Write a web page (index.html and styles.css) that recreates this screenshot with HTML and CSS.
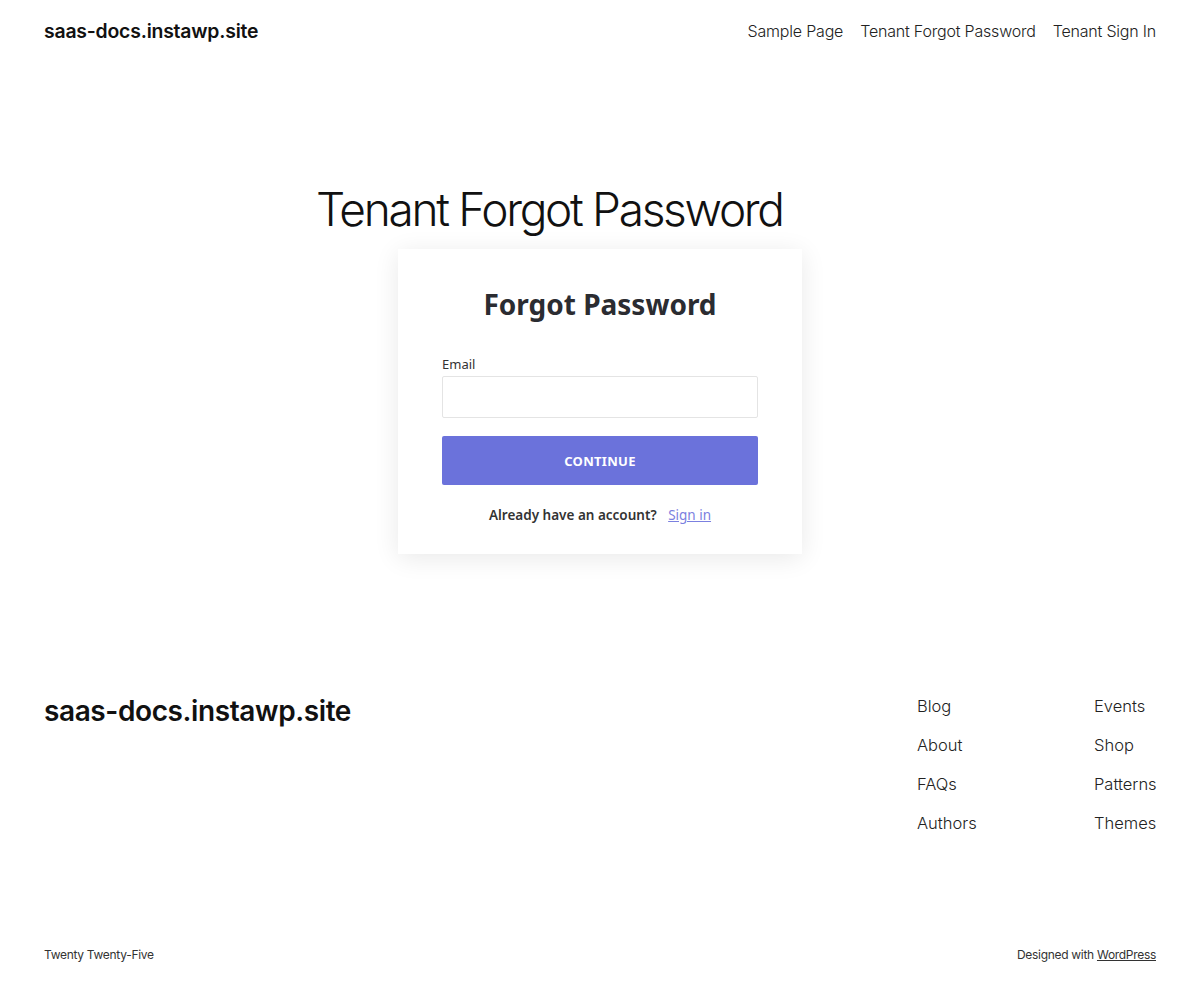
FILE: index.html
```html
<!DOCTYPE html>
<html lang="en">
<head>
  <meta charset="UTF-8">
  <meta name="viewport" content="width=device-width, initial-scale=1.0">
  <title>Tenant Forgot Password – saas-docs.instawp.site</title>
  <link rel="stylesheet" href="styles.css">
</head>
<body>
  <header class="site-header">
    <a class="site-title" href="#">saas-docs.instawp.site</a>
    <nav class="main-nav">
      <a href="#">Sample Page</a>
      <a href="#">Tenant Forgot Password</a>
      <a href="#">Tenant Sign In</a>
    </nav>
  </header>

  <main class="site-main">
    <h1 class="page-title">Tenant Forgot Password</h1>

    <div class="card">
      <h2 class="card-title">Forgot Password</h2>
      <form class="card-form" onsubmit="return false;">
        <label for="email">Email</label>
        <input type="email" id="email">
        <button type="submit" class="continue-btn">CONTINUE</button>
      </form>
      <p class="signin-line">Already have an account? <a href="#">Sign in</a></p>
    </div>
  </main>

  <footer class="site-footer">
    <div class="footer-top">
      <a class="footer-title" href="#">saas-docs.instawp.site</a>
      <div class="footer-links">
        <ul>
          <li><a href="#">Blog</a></li>
          <li><a href="#">About</a></li>
          <li><a href="#">FAQs</a></li>
          <li><a href="#">Authors</a></li>
        </ul>
        <ul>
          <li><a href="#">Events</a></li>
          <li><a href="#">Shop</a></li>
          <li><a href="#">Patterns</a></li>
          <li><a href="#">Themes</a></li>
        </ul>
      </div>
    </div>
    <div class="footer-bottom">
      <span>Twenty Twenty-Five</span>
      <span>Designed with <a href="#">WordPress</a></span>
    </div>
  </footer>
</body>
</html>
```

FILE: styles.css
```css
* {
  margin: 0;
  padding: 0;
  box-sizing: border-box;
}

body {
  font-family: 'Inter', 'Noto Sans', sans-serif;
  color: #111;
  background: #fff;
}

a {
  color: inherit;
  text-decoration: none;
}

/* header */
.site-header {
  display: flex;
  justify-content: space-between;
  align-items: center;
  padding: 0 44px;
  height: 62px;
}

.site-title {
  font-size: 19.4px;
  font-weight: 600;
  letter-spacing: -0.2px;
}

.main-nav {
  display: flex;
  gap: 17px;
}

.main-nav a {
  font-size: 16px;
  font-weight: 300;
  letter-spacing: -0.2px;
  color: #222;
}

/* main */
.site-main {
  padding-top: 120px;
  padding-bottom: 130px;
}

.page-title {
  font-size: 46px;
  font-weight: 300;
  letter-spacing: -2.3px;
  line-height: 1.2;
  padding-left: 316px;
  margin-bottom: 12px;
}

.card {
  width: 404px;
  margin: 0 auto;
  background: #fff;
  box-shadow: 0 4px 24px rgba(0, 0, 0, 0.09);
  padding: 36px 44px 30px;
  font-family: 'Noto Sans', sans-serif;
}

.card-title {
  text-align: center;
  font-size: 28px;
  font-weight: 700;
  color: #2b2c31;
  margin-bottom: 32px;
}

.card-form label {
  display: block;
  font-size: 13px;
  color: #333;
  margin-bottom: 3px;
}

.card-form input {
  display: block;
  width: 100%;
  height: 42px;
  border: 1px solid #e4e4e4;
  border-radius: 2px;
  padding: 0 12px;
  font-size: 14px;
  margin-bottom: 18px;
}

.continue-btn {
  display: block;
  width: 100%;
  height: 49px;
  background: #6b72db;
  color: #fff;
  border: none;
  border-radius: 2px;
  font-family: inherit;
  font-size: 13px;
  font-weight: 700;
  letter-spacing: 0.3px;
}

.signin-line {
  text-align: center;
  font-size: 13.5px;
  font-weight: 600;
  color: #333;
  margin-top: 21px;
}

.signin-line a {
  color: #7b80e0;
  font-weight: 400;
  text-decoration: underline;
  margin-left: 8px;
}

/* footer */
.site-footer {
  padding: 10px 44px 0;
}

.footer-top {
  display: flex;
  justify-content: space-between;
  align-items: flex-start;
  height: 253px;
}

.footer-title {
  font-size: 28px;
  font-weight: 600;
  letter-spacing: -0.4px;
}

.footer-links {
  display: flex;
  gap: 115px;
}

.footer-links ul {
  list-style: none;
  display: flex;
  flex-direction: column;
  gap: 14px;
  width: 62px;
}

.footer-links a {
  font-size: 16.5px;
  font-weight: 300;
  line-height: 25px;
  color: #222;
}

.footer-bottom {
  display: flex;
  justify-content: space-between;
  font-size: 12px;
  color: #333;
  letter-spacing: -0.3px;
}

.footer-bottom a {
  text-decoration: underline;
}
```
